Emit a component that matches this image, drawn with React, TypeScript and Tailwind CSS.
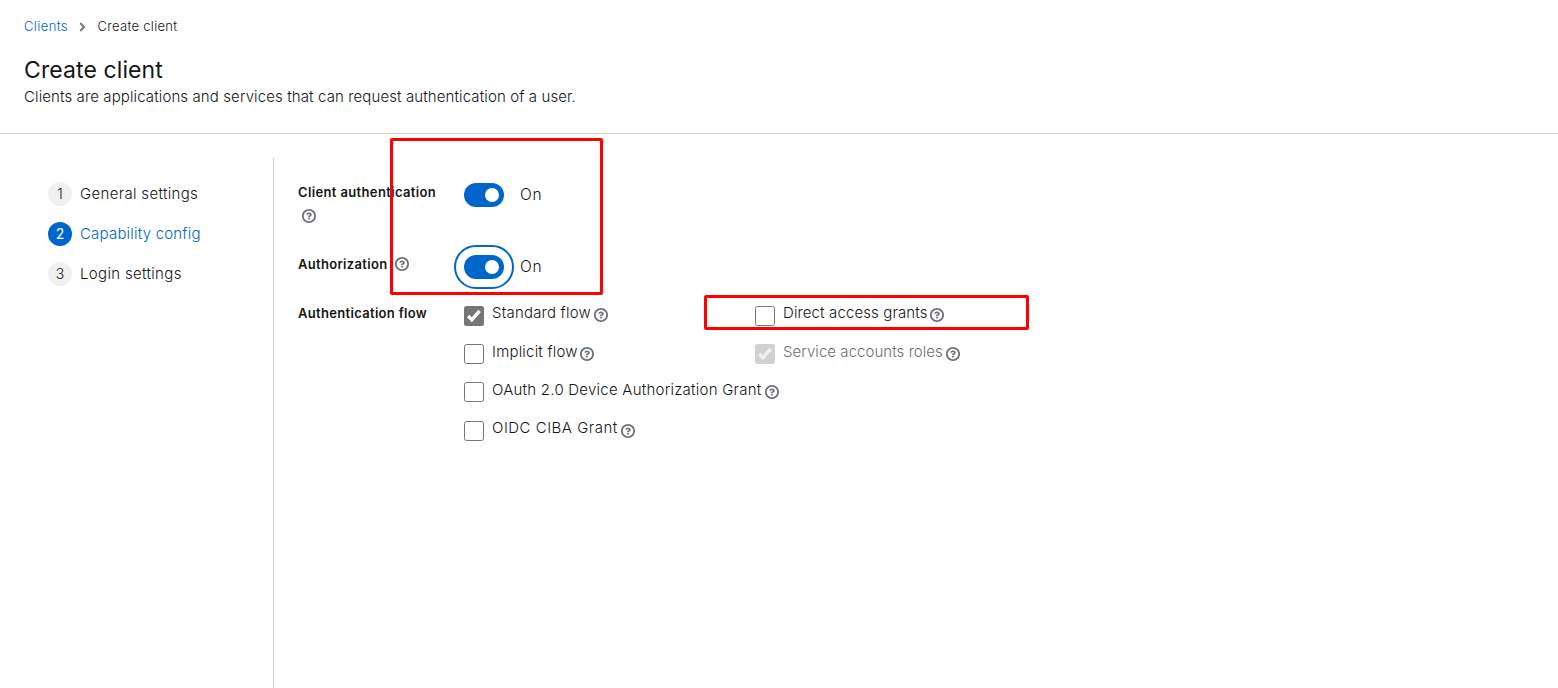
import type { ReactNode } from "react";

function HelpIcon() {
  return (
    <svg className="size-[14px] shrink-0" viewBox="0 0 1024 1024" fill="#6a6e73" aria-hidden="true">
      <path d="M521.3,576 C627.5,576 713.7,502 713.7,413.7 C713.7,325.4 627.6,253.6 521.3,253.6 C366,253.6 334.5,337.7 329.2,407.2 C329.2,414.3 335.2,416 343.5,416 L445,416 C450.5,416 458,415.5 460.8,406.5 C460.8,362.6 582.9,357.1 582.9,413.6 C582.9,441.9 556.2,470.9 521.3,473 C486.4,475.1 447.3,479.8 447.3,521.7 L447.3,553.8 C447.3,570.8 456.1,576 472,576 C487.9,576 521.3,576 521.3,576 M575.3,751.3 L575.3,655.3 C575.3,651 573.6,647 570.6,644 C567.6,641 563.5,639.3 559.3,639.3 L463.3,639.3 C459,639.3 455,641 452,644 C449,647 447.3,651 447.3,655.3 L447.3,751.3 C447.3,755.5 449,759.6 452,762.6 C455,765.6 459,767.3 463.3,767.3 L559.3,767.3 C563.5,767.3 567.6,765.6 570.6,762.6 C573.6,759.6 575.3,755.5 575.3,751.3 M512,896 C300.2,896 128,723.9 128,512 C128,300.3 300.2,128 512,128 C723.8,128 896,300.2 896,512 C896,723.7 723.9,896 512,896 M512.1,0 C229.7,0 0,229.8 0,512 C0,794.2 229.8,1024 512.1,1024 C794.4,1024 1024,794.3 1024,512 C1024,229.7 794.4,0 512.1,0" />
    </svg>
  );
}

function Check({ color }: { color: string }) {
  return (
    <svg className="size-5" viewBox="0 0 20 20" fill="none" stroke={color} strokeWidth="3.4" aria-hidden="true">
      <path d="M4.2 10 L7.8 13.8 L15.6 4.8" />
    </svg>
  );
}

type BoxState = "off" | "on" | "disabled";

const boxStyles: Record<BoxState, string> = {
  off: "border border-[#767676] bg-white",
  on: "bg-[#767676]",
  disabled: "bg-[#d1d1d1]",
};

function Option({ state = "off", width, children }: { state?: BoxState; width: string; children: ReactNode }) {
  return (
    <div className="flex h-[22px] items-start">
      <span className={`mt-[1.6px] size-5 shrink-0 rounded-[2.5px] ${boxStyles[state]}`}>
        {state === "on" && <Check color="#ffffff" />}
        {state === "disabled" && <Check color="#f0f0f0" />}
      </span>
      <span
        className={`-mt-[0.8px] ml-2 shrink-0 whitespace-nowrap text-[15px] leading-[19px] ${width} ${state === "disabled" ? "text-[#6a6e73]" : ""}`}
      >
        {children}
      </span>
      <span className="mt-[4.4px]">
        <HelpIcon />
      </span>
    </div>
  );
}

function Toggle({ focused = false }: { focused?: boolean }) {
  return (
    <span className="flex items-center gap-4">
      <span
        className={`flex h-6 w-10 items-center justify-end rounded-full bg-[#0066cc] pr-[5px] ${
          focused ? "outline-2 outline-offset-8 outline-[#0066cc]" : ""
        }`}
      >
        <span className="size-[14px] rounded-full bg-white" />
      </span>
      <span className="text-[15.5px] leading-6 tracking-[0.8px]">On</span>
    </span>
  );
}

function Step({
  n,
  active = false,
  tracking,
  children,
}: {
  n: number;
  active?: boolean;
  tracking: string;
  children: ReactNode;
}) {
  return (
    <li className="flex h-6 items-center gap-2">
      <span
        className={`flex size-6 items-center justify-center rounded-full text-[14px] leading-6 ${
          active ? "bg-[#0066cc] font-normal text-white" : "bg-[#f0f0f0]"
        }`}
      >
        {n}
      </span>
      <span className={`whitespace-nowrap text-[15px] leading-6 ${tracking} ${active ? "text-[#0066cc]" : ""}`}>
        {children}
      </span>
    </li>
  );
}

export default function App() {
  return (
    <div className="relative flex h-[688px] w-[1558px] flex-col overflow-hidden bg-white font-['Inter','Liberation_Sans',sans-serif] font-light text-[#151515]">
      <header className="h-[134px] shrink-0 border-b border-[#d2d2d2] px-6 pt-4">
        <nav className="flex h-[21px] items-center text-[13px]">
          <a className="w-[54.5px] tracking-[0.4px] text-[#0066cc]">Clients</a>
          <svg className="h-[14px] w-[7px]" viewBox="0 0 256 512" fill="#7d8084" aria-hidden="true">
            <path d="M224.3 273l-136 136c-9.4 9.4-24.6 9.4-33.9 0l-22.6-22.6c-9.4-9.4-9.4-24.6 0-33.9l96.4-96.4-96.4-96.4c-9.4-9.4-9.4-24.6 0-33.9L54.3 103c9.4-9.4 24.6-9.4 33.9 0l136 136c9.5 9.4 9.5 24.6.1 34z" />
          </svg>
          <span className="ml-3 tracking-[0.3px]">Create client</span>
        </nav>
        <h1 className="mt-[17px] text-[23px] leading-8 font-normal tracking-[0.1px]">Create client</h1>
        <p className="-mt-px text-[15px] leading-6 tracking-[0.11px]">
          Clients are applications and services that can request authentication of a user.
        </p>
      </header>

      <div className="flex grow pt-6">
        <ol className="flex w-[274px] flex-col gap-4 border-r border-[#d2d2d2] pt-6 pl-12">
          <Step n={1} tracking="tracking-[0.33px]">General settings</Step>
          <Step n={2} tracking="tracking-[0.2px]" active>Capability config</Step>
          <Step n={3} tracking="tracking-[0.33px]">Login settings</Step>
        </ol>

        <main className="pl-6">
          <div className="flex h-[72px] pt-[25px]">
            <div className="w-[166px] text-[13px] leading-[18px] font-semibold tracking-[0.36px]">
              <span className="block whitespace-nowrap">Client authentication</span>
              <span className="mt-2 ml-1 block">
                <HelpIcon />
              </span>
            </div>
            <div className="h-6">
              <Toggle />
            </div>
          </div>
          <div className="flex h-[72px] pt-[25px]">
            <div className="flex h-[18px] w-[166px] items-center text-[13px] leading-[18px] font-semibold tracking-[0.32px]">
              <span className="w-[97px]">Authorization</span>
              <HelpIcon />
            </div>
            <div className="h-6">
              <Toggle focused />
            </div>
          </div>
          <div className="flex pt-[2px]">
            <div className="w-[166px] text-[13px] leading-[18px] font-semibold tracking-[0.32px]">
              Authentication flow
            </div>
            <div className="flex flex-col gap-[16.4px]">
              <div className="flex">
                <div className="w-[291px]">
                  <Option state="on" width="w-[102px] tracking-[0.2px]">Standard flow</Option>
                </div>
                <Option width="w-[147px] tracking-[0.12px]">Direct access grants</Option>
              </div>
              <div className="flex">
                <div className="w-[291px]">
                  <Option width="w-[88px] tracking-[0.2px]">Implicit flow</Option>
                </div>
                <Option state="disabled" width="w-[163px] tracking-[0.05px]">Service accounts roles</Option>
              </div>
              <Option width="w-[273px] tracking-[0.24px]">OAuth 2.0 Device Authorization Grant</Option>
              <Option width="w-[129px] tracking-[0.5px]">OIDC CIBA Grant</Option>
            </div>
          </div>
        </main>
      </div>

      <div className="absolute top-[138px] left-[390px] h-[157px] w-[213px] rounded-[2px] border-3 border-[#ff0000]" />
      <div className="absolute top-[295px] left-[704px] h-[35px] w-[325px] rounded-[2px] border-3 border-[#ff0000]" />
    </div>
  );
}
